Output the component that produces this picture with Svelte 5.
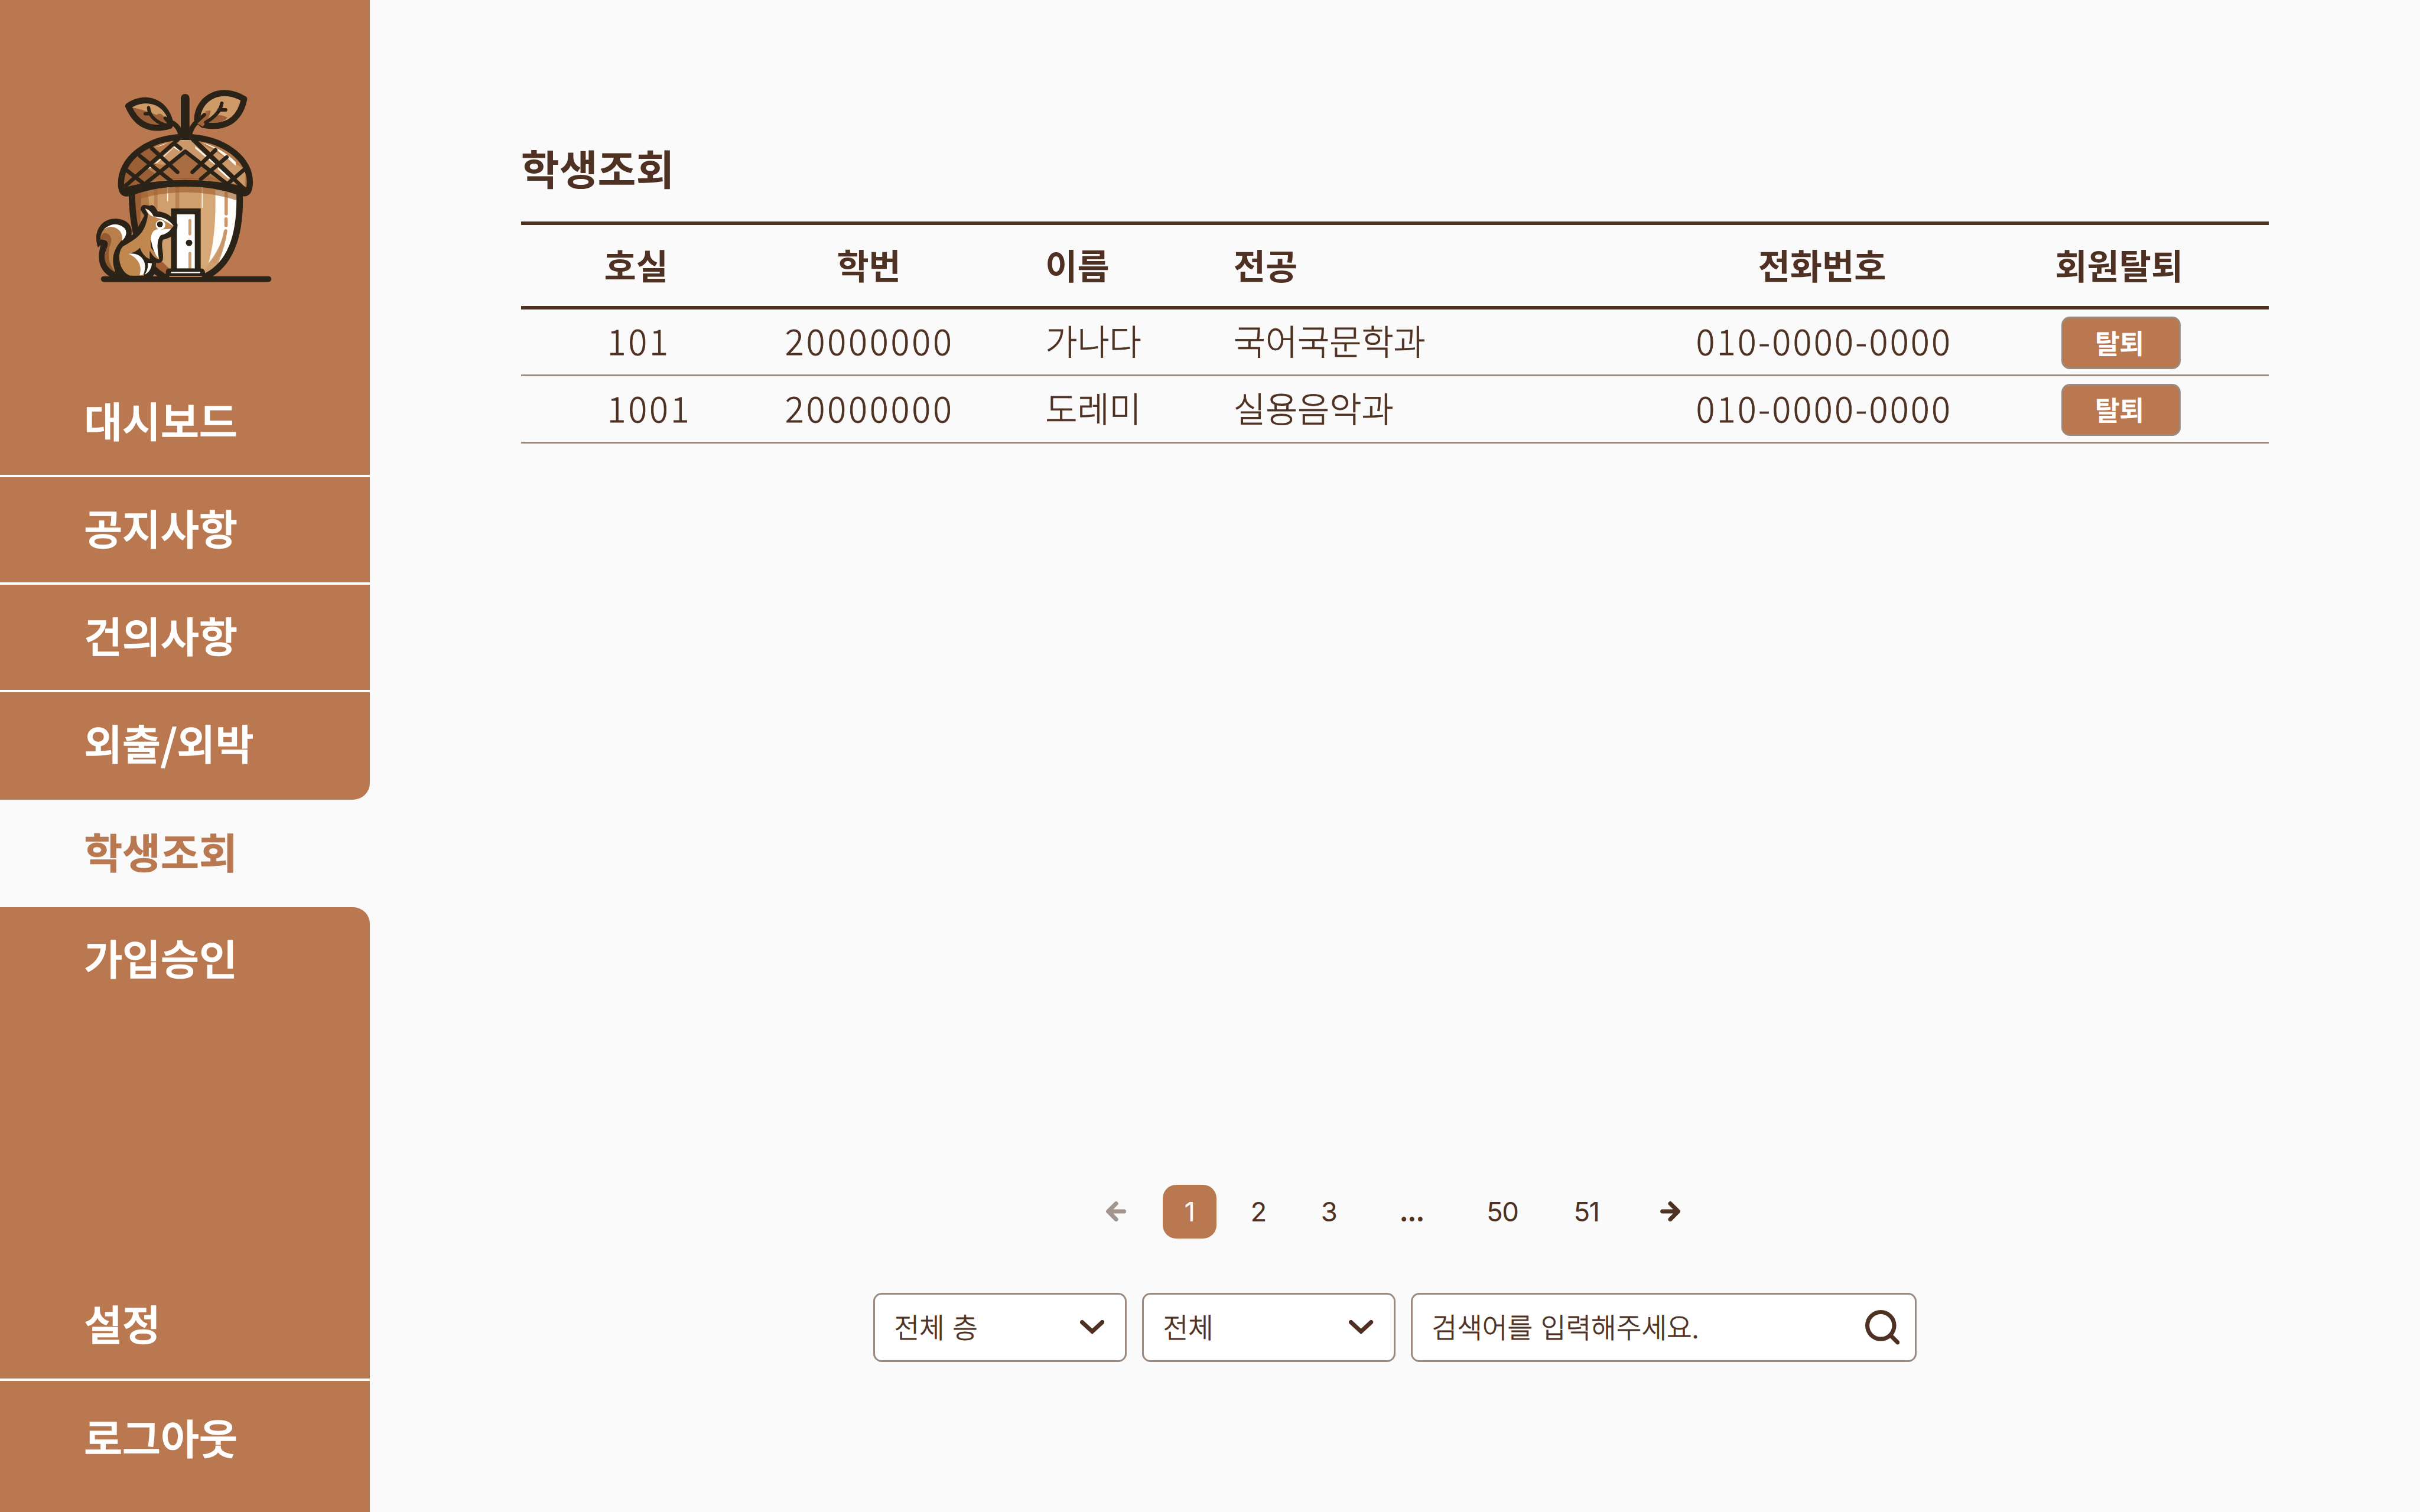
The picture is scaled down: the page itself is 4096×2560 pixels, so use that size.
<script>
  const menu = ['대시보드', '공지사항', '건의사항', '외출/외박', '학생조회', '가입승인'];
  const active = '학생조회';
  const rows = [
    { room: '101', id: '20000000', name: '가나다', major: '국어국문학과', phone: '010-0000-0000' },
    { room: '1001', id: '20000000', name: '도레미', major: '실용음악과', phone: '010-0000-0000' },
  ];
  const pages = ['1', '2', '3', '...', '50', '51'];
</script>

<div class="app">
  <aside>
    <div class="brand">
      <svg class="logo" viewBox="0 0 1440 1500" fill="none" stroke-linecap="round" stroke-linejoin="round">
        <defs>
          <clipPath id="cap"><path d="M266 760C250 560 470 408 722 408C980 408 1200 560 1184 750Q1178 830 1120 806Q725 660 330 806Q272 830 266 760Z" /></clipPath>
          <clipPath id="body"><path d="M340 800C350 1010 380 1400 640 1420H800C1030 1400 1120 1100 1112 800Q730 680 340 800Z" /></clipPath>
        </defs>
        <!-- nut body -->
        <g clip-path="url(#body)">
          <rect x="320" y="700" width="820" height="740" fill="#cf9f6d" />
          <path d="M340 780H412V880Q400 1100 520 1290L620 1390H500L360 1100Z" fill="#9c5f35" />
          <path d="M412 800H455L470 920L400 1060Z" fill="#b57b49" />
          <path d="M501 780H526V940H501ZM653 760H681V930H653Z" fill="#b98354" />
          <path d="M848 780H940Q945 1180 890 1320L850 1380H830V900Z" fill="#d6a877" />
          <path d="M938 790H1110V900Q1100 1190 960 1310Q1010 1190 1022 1074Q1010 1060 1000 1080Q980 1200 890 1310Q948 1100 938 790Z" fill="#fffefb" />
          <path d="M1016 810V957M1015 995V1040M1012 1080Q1000 1190 930 1300" stroke="#c9976a" stroke-width="24" />
          <path d="M598 770V865M845 770V912" stroke="#fff6ea" stroke-width="7" />
          <path d="M340 868Q725 740 1112 868V790Q725 660 340 790Z" fill="#a0612f" fill-opacity=".65" />
          <path d="M525 1310L560 1300L610 1350L580 1380L530 1340Z" fill="#a05f36" />
        </g>
        <path d="M342 815C350 1110 410 1310 560 1400M1112 815C1120 1110 1050 1310 880 1400" stroke="#2b2317" stroke-width="46" />
        <!-- cap -->
        <g clip-path="url(#cap)">
          <rect x="240" y="380" width="970" height="460" fill="#b87b49" />
          <path d="M240 840V380H640L500 480L590 560L460 640L560 700L300 790Z" fill="#9a5f35" />
          <path d="M690 420H780L1150 640V800L1010 740L840 590L722 500L600 610L500 600L640 480Z" fill="#cb986a" />
          <path d="M722 515L840 610L900 690L1040 740Q720 660 420 740L560 660L610 610Z" fill="#a86c40" />
          <path d="M300 790Q720 610 1150 790V760Q720 660 300 760Z" fill="#9a5b35" />
          <path d="M672 440L690 426H755L765 436Q720 424 672 440ZM500 485L612 444L560 468ZM505 600L655 470L695 505L680 508L642 485L525 594ZM455 636L490 605L485 630ZM795 475L930 590L940 606L925 600L795 490ZM956 625L1048 700L1030 706L958 640ZM840 446Q990 490 1085 590V615L1035 570L940 495Z" fill="#fffdf8" />
        </g>
        <path d="M266 760C250 560 470 408 722 408C980 408 1200 560 1184 750Q1178 830 1120 806Q725 670 330 806Q272 830 266 760Z" stroke="#2b2317" stroke-width="44" />
        <path d="M300 790Q725 690 1150 790" stroke="#2b2317" stroke-width="48" />
        <path d="M300 755L680 420M435 745L724 512L1030 750M400 545L625 725M485 490L668 660M645 455L690 492M780 430L1150 785M310 650L430 745M775 660L940 502M835 710L1020 553M1025 745L1140 645M800 440L1060 690" stroke="#2b2317" stroke-width="28" />
        <!-- stem and leaves -->
        <path d="M723 132V400" stroke="#2b2317" stroke-width="62" />
        <path d="M695 400C680 350 665 325 630 308M753 400C762 350 780 320 815 295" stroke="#2b2317" stroke-width="36" />
        <path d="M317 188C420 115 570 135 617 305L612 330C450 375 365 300 317 188Z" fill="#9c6038" stroke="#2b2317" stroke-width="44" />
        <path d="M345 198C430 145 550 165 595 268L570 262Q540 230 520 252Q420 212 345 198Z" fill="#cd9a68" />
        <path d="M462 200C468 270 530 310 590 325M438 243H472M580 275L620 320" stroke="#2b2317" stroke-width="24" />
        <path d="M808 285C815 120 990 40 1144 138C1110 300 1000 350 850 322Z" fill="#cd9a68" stroke="#2b2317" stroke-width="44" />
        <path d="M900 300Q940 225 1025 270Q990 315 900 305ZM805 310Q850 290 870 225L905 218Q905 260 850 335Z" fill="#a0623a" />
        <path d="M985 168C975 230 930 270 870 305M965 215H1012M860 250L800 305" stroke="#2b2317" stroke-width="25" />
        <!-- door -->
        <rect x="643" y="940" width="170" height="430" fill="#fffefe" stroke="#2b2317" stroke-width="42" stroke-linejoin="miter" />
        <path d="M757 1005V1102M757 1240V1350" stroke="#cf9f70" stroke-width="21" />
        <circle cx="751" cy="1165" r="23" fill="#2b2317" />
        <path d="M610 1348H836Q866 1348 866 1385L900 1420H540L585 1385Q582 1348 610 1348Z" fill="#2b2317" />
        <path d="M622 1377H831" stroke="#fff" stroke-width="9" stroke-linecap="butt" />
        <!-- squirrel -->
        <path d="M100 1198C60 1080 130 993 222 993C310 993 355 1050 338 1110L360 1102L432 970L405 930Q405 890 440 895L470 900Q500 880 525 940Q620 950 668 1030Q675 1120 565 1142C545 1190 575 1240 562 1290Q550 1315 515 1308L510 1380L480 1420H210C110 1370 90 1290 120 1180Z" fill="#2b2317" />
        <path d="M118 1140C120 1060 180 1040 222 1034C290 1035 320 1090 290 1128C200 1210 195 1290 225 1375C150 1330 130 1270 165 1200Q190 1140 118 1140Z" fill="#b97f4c" />
        <path d="M118 1138Q125 1080 170 1100Q215 1130 180 1200Q165 1310 225 1375C150 1340 130 1270 168 1195Q190 1140 118 1138Z" fill="#94592f" />
        <path d="M140 1070Q220 1000 290 1060Q320 1100 274 1150Q280 1090 235 1062Q190 1035 140 1070Z" fill="#fff" />
        <path d="M458 960L437 920Q480 930 498 978Q590 980 640 1045L605 1085L520 1115L475 1150L480 1200L540 1285Q500 1280 470 1220V1282Q420 1260 400 1200Q370 1235 320 1240C400 1250 440 1300 430 1400H330C250 1370 230 1240 280 1190C390 1130 440 1090 458 960Z" fill="#c0884f" />
        <path d="M437 920Q480 935 498 978Q590 975 642 1046Q600 1020 560 998L495 978Q470 970 458 950Z" fill="#fff" />
        <path d="M480 1150C475 1080 510 1060 560 1070L622 1065Q600 1100 550 1110C515 1150 525 1210 536 1280Q495 1240 480 1150Z" fill="#fff" />
        <circle cx="547" cy="1037" r="34" fill="#fff" />
        <circle cx="543" cy="1033" r="21" fill="#2b2317" />
        <path d="M318 1242Q425 1235 438 1330Q435 1385 415 1396H398C420 1320 380 1270 318 1242ZM456 1308L486 1312Q480 1370 434 1392Q462 1350 456 1308Z" fill="#fbfaf8" />
        <!-- ground -->
        <path d="M142 1424H1318" stroke="#2b2317" stroke-width="41" />
        <path d="M610 1405H843" stroke="#ba784f" stroke-width="8" stroke-linecap="butt" />
      </svg>
    </div>

    <nav>
      {#each menu as item, i}
        <a
          class:active={item === active}
          class:before={menu[i + 1] === active}
          class:after={menu[i - 1] === active}
          href="#{item}">{item}</a>
      {/each}
    </nav>

    <div class="bottom">
      <a href="#settings">설정</a>
      <a href="#logout">로그아웃</a>
    </div>
  </aside>

  <main>
    <h1>학생조회</h1>

    <div class="table">
      <div class="tr head">
        <span class="c-room">호실</span>
        <span class="c-id">학번</span>
        <span>이름</span>
        <span>전공</span>
        <span class="c-phone">전화번호</span>
        <span class="c-act">회원탈퇴</span>
      </div>
      {#each rows as r}
        <div class="tr">
          <span class="c-room num">{r.room}</span>
          <span class="c-id num">{r.id}</span>
          <span>{r.name}</span>
          <span>{r.major}</span>
          <span class="c-phone num">{r.phone}</span>
          <span class="c-act"><button>탈퇴</button></span>
        </div>
      {/each}
    </div>

    <div class="pager">
      <svg class="arrow off" viewBox="0 0 12 12"><path d="M6 1.3L1.3 6L6 10.7M1.6 6H10.7" /></svg>
      {#each pages as p}
        <span class="page" class:on={p === '1'} class:dots={p === '...'} class:wide={p.length === 2}>{p}</span>
      {/each}
      <svg class="arrow next" viewBox="0 0 12 12"><path d="M6 1.3L10.7 6L6 10.7M10.4 6H1.3" /></svg>
    </div>

    <div class="filters">
      {#each ['전체 층', '전체'] as label}
        <div class="field select">
          <span>{label}</span>
          <svg class="chev" viewBox="0 0 14.5 8.5"><path d="M1.25 1.25L7.25 6.8L13.25 1.25" /></svg>
        </div>
      {/each}
      <div class="field search">
        <span>검색어를 입력해주세요.</span>
        <svg class="lens" viewBox="0 0 20.5 20.5"><circle cx="9.25" cy="9.25" r="8" /><path d="M15 15L19.25 19.25" /></svg>
      </div>
    </div>
  </main>
</div>

<style>
  :global(html) {
    font-size: calc(100vw / 144);
  }
  :global(body) {
    overflow: hidden;
  }
  .app {
    display: flex;
    width: 144rem;
    height: 90rem;
    background: #fafafa;
    color: #4e3122;
    font-family: 'Noto Sans CJK KR', sans-serif;
    font-size: 2rem;
    line-height: 1;
    white-space: nowrap;
  }
  a {
    color: inherit;
    text-decoration: none;
  }
  aside {
    display: flex;
    flex-direction: column;
    width: 22rem;
    color: #fff;
    font-size: 2.48rem;
    font-weight: 500;
  }
  .brand {
    height: 22rem;
    padding: 4.75rem 0 0 5rem;
    box-sizing: border-box;
    background: #b9784f;
  }
  .logo {
    display: block;
    width: 12rem;
    height: 12.5rem;
  }
  nav {
    display: flex;
    flex-direction: column;
  }
  aside a {
    display: flex;
    align-items: center;
    height: 6.4rem;
    padding: 0 0 0.32rem 5rem;
    box-sizing: border-box;
    background: #b9784f;
    border-bottom: 0.15rem solid #fff;
    -webkit-text-stroke: 0.05rem currentColor;
  }
  nav a.before {
    border-bottom-color: #b9784f;
    border-bottom-right-radius: 1rem;
  }
  nav a.active {
    background: none;
    border: 0;
    color: #b9784f;
    font-weight: 700;
    -webkit-text-stroke: 0.02rem currentColor;
  }
  nav a.after {
    border-bottom-color: #b9784f;
    border-top-right-radius: 1rem;
  }
  .bottom {
    flex: 1;
    display: flex;
    flex-direction: column;
    justify-content: flex-end;
    background: #b9784f;
  }
  .bottom a:first-child {
    padding-bottom: 0.42rem;
  }
  .bottom a:last-child {
    height: 7.8rem;
    padding-bottom: 1.16rem;
    border: 0;
  }
  main {
    flex: 1;
    padding: 8.5rem 9rem 0;
    display: flex;
    flex-direction: column;
  }
  h1 {
    margin: 0;
    height: 4.7rem;
    line-height: 2.94rem;
    font-size: 2.48rem;
    font-weight: 700;
  }
  .table {
    border-top: 0.212rem solid #4e3122;
  }
  .tr {
    display: grid;
    grid-template-columns: 13.6rem 17.6rem 11.2rem 26.1rem 18rem 17.4rem;
    align-items: center;
    height: 4rem;
    padding-bottom: 0.18rem;
    box-sizing: border-box;
    border-bottom: 0.106rem solid #9b8a7f;
    font-size: 2.07rem;
    font-weight: 300;
    -webkit-text-stroke: 0.03rem currentColor;
  }
  .head {
    height: 5rem;
    padding-bottom: 0.1rem;
    border-bottom-width: 0.212rem;
    border-color: #4e3122;
    font-weight: 700;
    -webkit-text-stroke: 0;
  }
  .num {
    letter-spacing: 0.15rem;
  }
  .c-room {
    padding-left: 4.95rem;
  }
  .c-room.num {
    padding-left: 5.13rem;
  }
  .c-id,
  .c-phone,
  .c-act {
    text-align: center;
  }
  .c-id {
    padding-right: 3.4rem;
  }
  .c-id.num {
    padding-right: 3.3rem;
  }
  .head .c-phone {
    padding-right: 0.15rem;
  }
  .head .c-act {
    padding-right: 0.2rem;
  }
  .c-phone.num {
    letter-spacing: 0.13rem;
    padding-left: 0.1rem;
  }
  button {
    display: block;
    width: 7.1rem;
    height: 3.1rem;
    margin: 0.28rem auto 0;
    padding: 0 0.15rem 0.08rem 0;
    border: 0.106rem solid #9b8a7f;
    border-radius: 0.5rem;
    background: #b9784f;
    color: #fff;
    font: 500 1.6rem/1 'Noto Sans CJK KR', sans-serif;
    -webkit-text-stroke: 0.03rem currentColor;
  }
  .pager {
    display: flex;
    align-items: center;
    margin-top: 44.1rem;
    height: 3.2rem;
    padding-left: 34.8rem;
    font-family: Inter, sans-serif;
    font-size: 1.6rem;
  }
  .page {
    width: 3.2rem;
    margin-right: 1rem;
    text-align: center;
    line-height: 3.2rem;
  }
  .page.on {
    margin-right: 0.9rem;
    border-radius: 0.8rem;
    background: #b9784f;
    color: #fafafa;
  }
  .page.dots {
    width: 4.6rem;
    font-weight: 700;
    letter-spacing: -0.05rem;
  }
  .page.wide {
    width: 4.2rem;
    margin-right: 0.8rem;
    letter-spacing: -0.05rem;
  }
  .arrow {
    width: 1.2rem;
    height: 1.2rem;
    fill: none;
    stroke: #4e3122;
    stroke-width: 2.5;
    stroke-linecap: round;
    stroke-linejoin: round;
  }
  .arrow.off {
    margin-right: 2.2rem;
    opacity: 0.5;
  }
  .arrow.next {
    margin-left: 1.5rem;
  }
  .filters {
    display: flex;
    gap: 0.9rem;
    margin-top: 3.25rem;
    padding-left: 20.95rem;
  }
  .field {
    display: flex;
    align-items: center;
    justify-content: space-between;
    width: 15.1rem;
    height: 4.1rem;
    padding: 0 1.22rem 0 1.15rem;
    box-sizing: border-box;
    border: 0.106rem solid #9b8a7f;
    border-radius: 0.5rem;
    background: #fff;
    font-size: 1.63rem;
    font-weight: 300;
    word-spacing: 0.12rem;
    -webkit-text-stroke: 0.03rem currentColor;
  }
  .field span {
    padding-bottom: 0.16rem;
  }
  .search {
    width: 30.1rem;
    padding-right: 0.92rem;
  }
  .chev,
  .lens {
    fill: none;
    stroke: #4e3122;
    stroke-width: 2.5;
    stroke-linecap: round;
    stroke-linejoin: miter;
  }
  .chev {
    width: 1.45rem;
    height: 0.85rem;
  }
  .lens {
    width: 2.05rem;
    height: 2.05rem;
  }
</style>
